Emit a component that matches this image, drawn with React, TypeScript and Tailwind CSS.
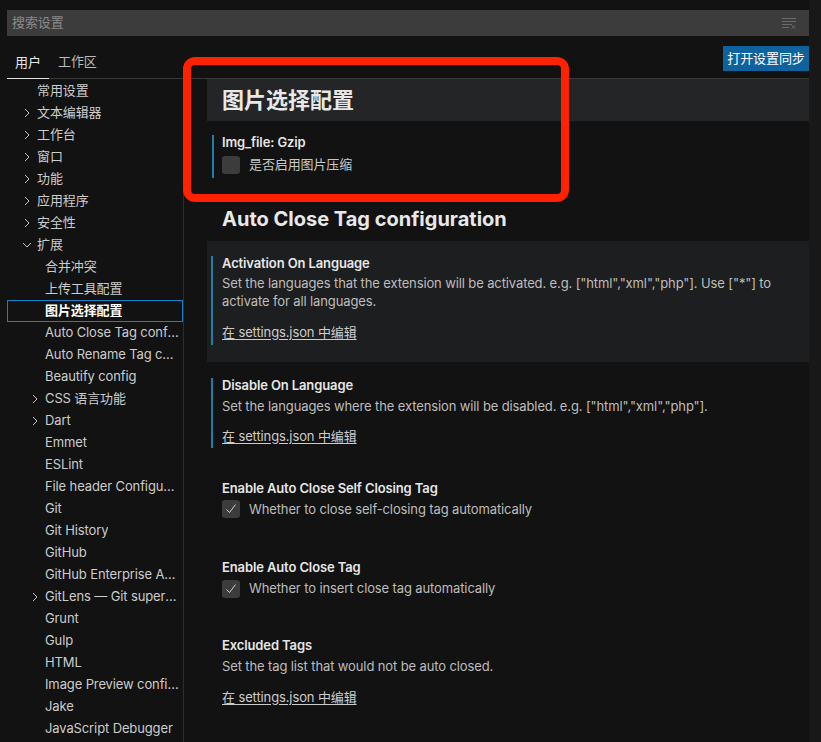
import React from "react";

const font = {
  fontFamily:
    '"Inter", "Noto Sans CJK SC", "Noto Sans", sans-serif',
};

type TreeItem = {
  label: string;
  level: 0 | 1;
  chevron?: "right" | "down";
  selected?: boolean;
};

const tree: TreeItem[] = [
  { label: "常用设置", level: 0 },
  { label: "文本编辑器", level: 0, chevron: "right" },
  { label: "工作台", level: 0, chevron: "right" },
  { label: "窗口", level: 0, chevron: "right" },
  { label: "功能", level: 0, chevron: "right" },
  { label: "应用程序", level: 0, chevron: "right" },
  { label: "安全性", level: 0, chevron: "right" },
  { label: "扩展", level: 0, chevron: "down" },
  { label: "合并冲突", level: 1 },
  { label: "上传工具配置", level: 1 },
  { label: "图片选择配置", level: 1, selected: true },
  { label: "Auto Close Tag configuration", level: 1 },
  { label: "Auto Rename Tag configuration", level: 1 },
  { label: "Beautify config", level: 1 },
  { label: "CSS 语言功能", level: 1, chevron: "right" },
  { label: "Dart", level: 1, chevron: "right" },
  { label: "Emmet", level: 1 },
  { label: "ESLint", level: 1 },
  { label: "File header Configuration", level: 1 },
  { label: "Git", level: 1 },
  { label: "Git History", level: 1 },
  { label: "GitHub", level: 1 },
  { label: "GitHub Enterprise Authentication", level: 1 },
  { label: "GitLens — Git supercharged", level: 1, chevron: "right" },
  { label: "Grunt", level: 1 },
  { label: "Gulp", level: 1 },
  { label: "HTML", level: 1 },
  { label: "Image Preview configuration", level: 1 },
  { label: "Jake", level: 1 },
  { label: "JavaScript Debugger", level: 1 },
];

const Chevron = ({ dir }: { dir: "right" | "down" }) => (
  <svg width="10" height="10" viewBox="0 0 10 10" className="shrink-0">
    {dir === "right" ? (
      <path d="M3 1 L7 5 L3 9" fill="none" stroke="#c5c5c5" strokeWidth="1" />
    ) : (
      <path d="M1 3 L5 7 L9 3" fill="none" stroke="#c5c5c5" strokeWidth="1" />
    )}
  </svg>
);

const Check = () => (
  <div className="w-[18px] h-[18px] rounded-[3px] bg-[#3c3c3c] flex items-center justify-center shrink-0">
    <svg width="14" height="14" viewBox="0 0 14 14">
      <path d="M2.5 7.5 L5.5 10.5 L11.5 2.5" fill="none" stroke="#d0d0d0" strokeWidth="1" />
    </svg>
  </div>
);

const EditLink = () => (
  <div className="h-[18px] leading-[18px] text-[13px] text-[#cccccc] underline underline-offset-2">
    在 settings.json 中编辑
  </div>
);

const Title = ({ children }: { children: React.ReactNode }) => (
  <div className="h-[14px] leading-[14px] text-[13px] font-semibold text-[#e6e6e6]">
    {children}
  </div>
);

const Desc = ({ children }: { children: React.ReactNode }) => (
  <div className="leading-[18px] text-[13px] text-[#bdbdbd]">{children}</div>
);

export default function App() {
  return (
    <div
      className="relative w-[821px] h-[742px] overflow-hidden bg-[#121212] flex tracking-[-0.12px]"
      style={font}
    >
      <div className="w-[809px] pl-[7px] flex flex-col">
        {/* search */}
        <div className="mt-[10px] h-[26px] bg-[#3c3c3c] flex items-center pl-[5px] pr-[12px]">
          <span className="text-[13px] text-[#8b8b8b] flex-1">搜索设置</span>
          <svg width="16" height="14" viewBox="0 0 16 14">
            <g stroke="#6b6b6b" strokeWidth="1">
              <path d="M1 2.5 H15" />
              <path d="M1 5.5 H15" />
              <path d="M1 8.5 H11" />
              <path d="M1 11.5 H8" />
              <path d="M11 9.5 L14 12.5 M14 9.5 L11 12.5" />
            </g>
          </svg>
        </div>

        {/* tabs row */}
        <div className="h-[43px] flex items-end border-b border-[#3a3a3a]">
          <div className="w-[42px] h-full flex items-center justify-center pt-[10px] border-b border-[#e0e0e0] -mb-px text-[13px] text-[#e7e7e7]">
            用户
          </div>
          <div className="h-full flex items-center pl-[9px] pt-[10px] text-[13px] text-[#bbbbbb]">
            工作区
          </div>
          <div className="flex-1" />
          <div className="self-start mt-[10px] h-[25px] w-[86px] bg-[#0e639c] flex items-center justify-center text-[13px] text-white">
            打开设置同步
          </div>
        </div>

        <div className="flex flex-1 min-h-0">
          {/* sidebar */}
          <div className="w-[177px] shrink-0 border-r border-[#2e2e2e] flex flex-col pt-px">
            {tree.map((t) => (
              <div
                key={t.label}
                className={
                  "h-[22px] shrink-0 flex items-center pr-[3px] text-[13px] " +
                  (t.selected
                    ? "border border-[#1a7fc7] text-white font-semibold"
                    : "border border-transparent text-[#cccccc]")
                }
              >
                <div
                  className={
                    "flex items-center justify-start shrink-0 " +
                    (t.level === 0 ? "w-[29px] pl-[14px]" : "w-[37px] pl-[22px]")
                  }
                >
                  {t.chevron && <Chevron dir={t.chevron} />}
                </div>
                <span className="truncate">{t.label}</span>
              </div>
            ))}
          </div>

          {/* main */}
          <div className="flex-1 pl-[23px] flex flex-col">
            <div className="h-[42px] bg-[#242526] flex items-center pl-[15px] text-[22px] font-bold text-[#e8e8e8] tracking-normal">
              图片选择配置
            </div>

            <div className="mt-[14px] ml-[5px] pl-[8px] border-l-2 border-[#1b7fa8] pb-[3px]">
              <Title>Img_file: Gzip</Title>
              <div className="mt-[6px] flex items-center gap-[9px]">
                <div className="w-[18px] h-[18px] rounded-[3px] bg-[#3c3c3c]" />
                <span className="text-[13px] text-[#c8c8c8]">是否启用图片压缩</span>
              </div>
            </div>

            <div className="h-[63px] flex items-end pb-[8px] pl-[15px] leading-[28px] text-[20px] font-bold text-[#e8e8e8] tracking-normal">
              Auto Close Tag configuration
            </div>

            <div className="bg-[#1d1e1f] pt-[15px] pb-[17px] pr-[20px]">
              <div className="ml-[4px] pl-[9px] border-l-2 border-[#1b7fa8] pb-[4px]">
                <Title>Activation On Language</Title>
                <div className="mt-[4px]">
                  <Desc>
                    Set the languages that the extension will be activated. e.g.
                    ["html","xml","php"]. Use ["*"] to activate for all languages.
                  </Desc>
                </div>
                <div className="mt-[13px]">
                  <EditLink />
                </div>
              </div>
            </div>

            <div className="mt-[16px] ml-[4px] pl-[9px] border-l-2 border-[#1b7fa8] pb-[3px]">
              <Title>Disable On Language</Title>
              <div className="mt-[5px]">
                <Desc>
                  Set the languages where the extension will be disabled. e.g.
                  ["html","xml","php"].
                </Desc>
              </div>
              <div className="mt-[12px]">
                <EditLink />
              </div>
            </div>

            <div className="mt-[33px] ml-[6px] pl-[9px]">
              <Title>Enable Auto Close Self Closing Tag</Title>
              <div className="mt-[5px] flex items-center gap-[9px]">
                <Check />
                <span className="text-[13px] text-[#bdbdbd]">
                  Whether to close self-closing tag automatically
                </span>
              </div>
            </div>

            <div className="mt-[41px] ml-[6px] pl-[9px]">
              <Title>Enable Auto Close Tag</Title>
              <div className="mt-[5px] flex items-center gap-[9px]">
                <Check />
                <span className="text-[13px] text-[#bdbdbd]">
                  Whether to insert close tag automatically
                </span>
              </div>
            </div>

            <div className="mt-[39px] ml-[6px] pl-[9px]">
              <Title>Excluded Tags</Title>
              <div className="mt-[5px]">
                <Desc>Set the tag list that would not be auto closed.</Desc>
              </div>
              <div className="mt-[13px]">
                <EditLink />
              </div>
            </div>
          </div>
        </div>
      </div>
      <div className="w-[12px] bg-[#181818]" />

      {/* annotation box */}
      <div className="absolute left-[183px] top-[57px] w-[386px] h-[145px] border-[8px] border-[#ff2200] rounded-[12px]" />
    </div>
  );
}
